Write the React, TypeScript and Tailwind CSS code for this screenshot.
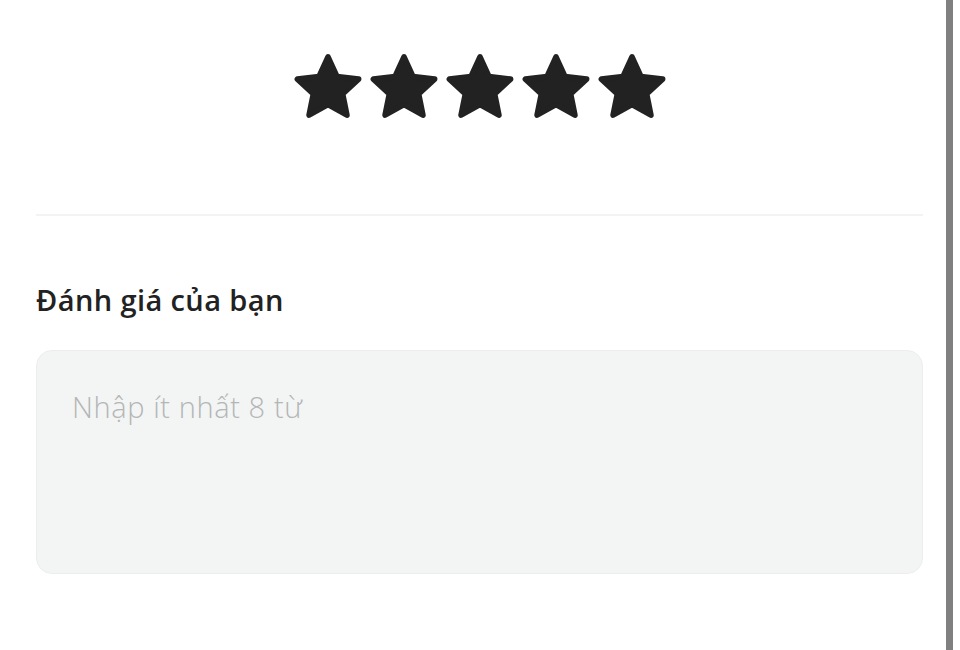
import { useState } from "react";

function Star() {
  return (
    <svg viewBox="0 0 100 100" className="w-[70px] h-[70px]">
      <polygon
        points="50,7 62.93,35.2 93.75,38.79 70.92,59.8 77.04,90.21 50,75 22.96,90.21 29.08,59.8 6.25,38.79 37.07,35.2"
        fill="#222222"
        stroke="#222222"
        strokeWidth={8}
        strokeLinejoin="round"
      />
    </svg>
  );
}

export default function App() {
  const [review, setReview] = useState("");

  return (
    <div className="flex w-[960px] h-[650px] bg-white overflow-hidden" style={{ fontFamily: "'Open Sans', Lato, sans-serif" }}>
      <div className="flex-1 pl-[36px] pr-[23px] pt-[52px]">
        <div className="flex justify-center gap-[6px]">
          {[0, 1, 2, 3, 4].map((i) => (
            <Star key={i} />
          ))}
        </div>

        <div className="mt-[92px] h-[2px] bg-[#f3f3f3]" />

        <h2 className="mt-[66px] text-[29px] leading-[36px] tracking-[0.4px] font-semibold text-[#222222]">Đánh giá của bạn</h2>

        <textarea
          value={review}
          onChange={(e) => setReview(e.target.value)}
          placeholder="Nhập ít nhất 8 từ"
          className="mt-[32px] block w-full h-[224px] resize-none rounded-[16px] bg-[#f3f4f4] border border-[#eceeee] px-[35px] pt-[38px] text-[29px] leading-[36px] tracking-[0.6px] font-light text-[#222222] placeholder:text-[#b4b6b6] outline-none"
        />
      </div>
      <div className="w-[7px] bg-[#808080]" />
      <div className="w-[7px] bg-white" />
    </div>
  );
}
